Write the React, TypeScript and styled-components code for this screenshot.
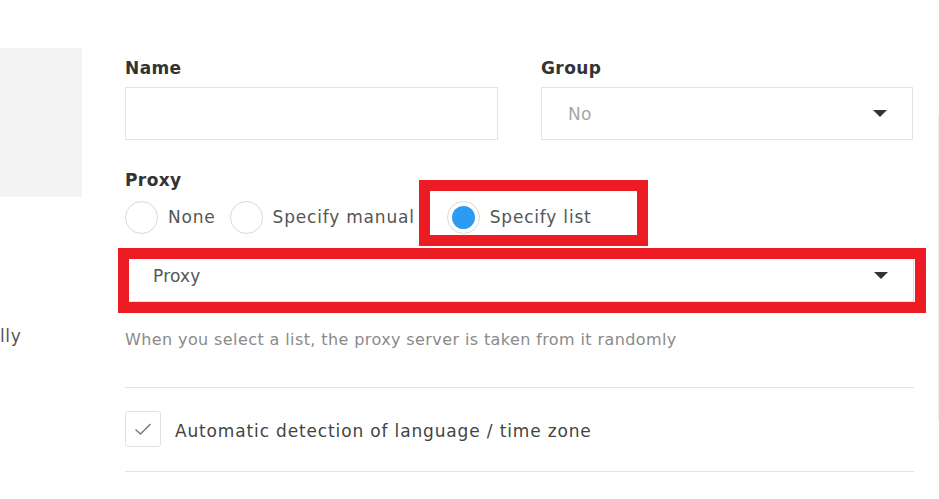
import styled, { createGlobalStyle } from "styled-components";

const Global = createGlobalStyle`
  body {
    margin: 0;
    background: #fff;
    font-family: "DejaVu Sans", "Liberation Sans", sans-serif;
  }
`;

const Page = styled.div`
  position: relative;
  width: 939px;
  height: 499px;
  overflow: hidden;
  display: flex;
`;

const Side = styled.div`
  width: 125px;
  flex-shrink: 0;
  padding-top: 48px;
`;

const SidePanel = styled.div`
  width: 82px;
  height: 149px;
  background: #f3f3f3;
`;

const SideText = styled.div`
  margin-top: 129px;
  font-size: 17px;
  letter-spacing: 0.6px;
  color: #555;
`;

const Main = styled.div`
  width: 789px;
  padding-top: 58px;
`;

const Row = styled.div`
  display: flex;
  gap: 43px;
`;

const Field = styled.div<{ $w: number }>`
  width: ${(p) => p.$w}px;
  display: flex;
  flex-direction: column;
`;

const Label = styled.div<{ $top?: number }>`
  font-size: 17px;
  line-height: 20px;
  font-weight: 700;
  letter-spacing: 0.4px;
  color: #333;
  margin-top: ${(p) => p.$top ?? 0}px;
`;

const Input = styled.div`
  margin-top: 9px;
  height: 53px;
  box-sizing: border-box;
  border: 1px solid #e2e3e5;
`;

const Select = styled.div<{ $top?: number; $dim?: boolean }>`
  margin-top: ${(p) => p.$top ?? 9}px;
  height: 53px;
  box-sizing: border-box;
  border: 1px solid #e2e3e5;
  display: flex;
  align-items: center;
  justify-content: space-between;
  padding: 0 25px 0 ${(p) => (p.$dim ? 26 : 27)}px;
  font-size: 17px;
  letter-spacing: 0.2px;
  color: ${(p) => (p.$dim ? "#a6a6a6" : "#555")};
`;

const Arrow = styled.span`
  width: 0;
  height: 0;
  border-left: 7px solid transparent;
  border-right: 7px solid transparent;
  border-top: 7px solid #333;
`;

const Radios = styled.div`
  display: flex;
  align-items: center;
  margin-top: 10px;
  height: 34px;
`;

const RadioItem = styled.label<{ $gap: number }>`
  display: flex;
  align-items: center;
  gap: 10px;
  margin-right: ${(p) => p.$gap}px;
  font-size: 17px;
  letter-spacing: 0.8px;
  color: #555;
`;

const Circle = styled.span<{ $on?: boolean }>`
  width: 33px;
  height: 33px;
  box-sizing: border-box;
  border-radius: 50%;
  border: 1px solid #d6d9de;
  display: flex;
  align-items: center;
  justify-content: center;
  &::after {
    content: "";
    display: ${(p) => (p.$on ? "block" : "none")};
    width: 23px;
    height: 23px;
    border-radius: 50%;
    background: #2b9bf4;
  }
`;

const Help = styled.div`
  margin-top: 28px;
  font-size: 16px;
  line-height: 20px;
  letter-spacing: 0.4px;
  color: #8a8a8a;
`;

const Divider = styled.div<{ $top: number }>`
  margin-top: ${(p) => p.$top}px;
  height: 1px;
  background: #e3e3e3;
`;

const CheckRow = styled.label`
  display: flex;
  align-items: center;
  gap: 14px;
  margin-top: 23px;
  font-size: 17px;
  letter-spacing: 0.85px;
  color: #444;
`;

const CheckText = styled.span`
  padding-top: 3px;
`;

const Box = styled.span`
  width: 36px;
  height: 36px;
  box-sizing: border-box;
  border: 1px solid #e0e1e4;
  border-radius: 3px;
  display: flex;
  align-items: center;
  justify-content: center;
`;

const Mark = styled.div<{ $x: number; $y: number; $w: number; $h: number }>`
  position: absolute;
  left: ${(p) => p.$x}px;
  top: ${(p) => p.$y}px;
  width: ${(p) => p.$w}px;
  height: ${(p) => p.$h}px;
  box-sizing: border-box;
  border: 11px solid #ed1c24;
  pointer-events: none;
`;

const EdgeLine = styled.div`
  position: absolute;
  right: 0;
  top: 115px;
  width: 1px;
  height: 305px;
  background: #f0f0f0;
`;

export default function App() {
  return (
    <Page>
      <Global />
      <Side>
        <SidePanel />
        <SideText>lly</SideText>
      </Side>
      <Main>
        <Row>
          <Field $w={373}>
            <Label>Name</Label>
            <Input />
          </Field>
          <Field $w={372}>
            <Label>Group</Label>
            <Select $dim>
              No
              <Arrow />
            </Select>
          </Field>
        </Row>
        <Label $top={30}>Proxy</Label>
        <Radios>
          <RadioItem $gap={14}>
            <Circle />
            None
          </RadioItem>
          <RadioItem $gap={32}>
            <Circle />
            Specify manual
          </RadioItem>
          <RadioItem $gap={0}>
            <Circle $on />
            Specify list
          </RadioItem>
        </Radios>
        <Select $top={15}>
          Proxy
          <Arrow />
        </Select>
        <Help>When you select a list, the proxy server is taken from it randomly</Help>
        <Divider $top={37} />
        <CheckRow>
          <Box>
            <svg width="18" height="14" viewBox="0 0 18 14" fill="none">
              <path d="M1.5 7.5 L6.5 12 L16.5 2" stroke="#777" strokeWidth="1.4" />
            </svg>
          </Box>
          <CheckText>Automatic detection of language / time zone</CheckText>
        </CheckRow>
        <Divider $top={24} />
      </Main>
      <EdgeLine />
      <Mark $x={419} $y={180} $w={229} $h={66} />
      <Mark $x={118} $y={248} $w={808} $h={65} />
    </Page>
  );
}
